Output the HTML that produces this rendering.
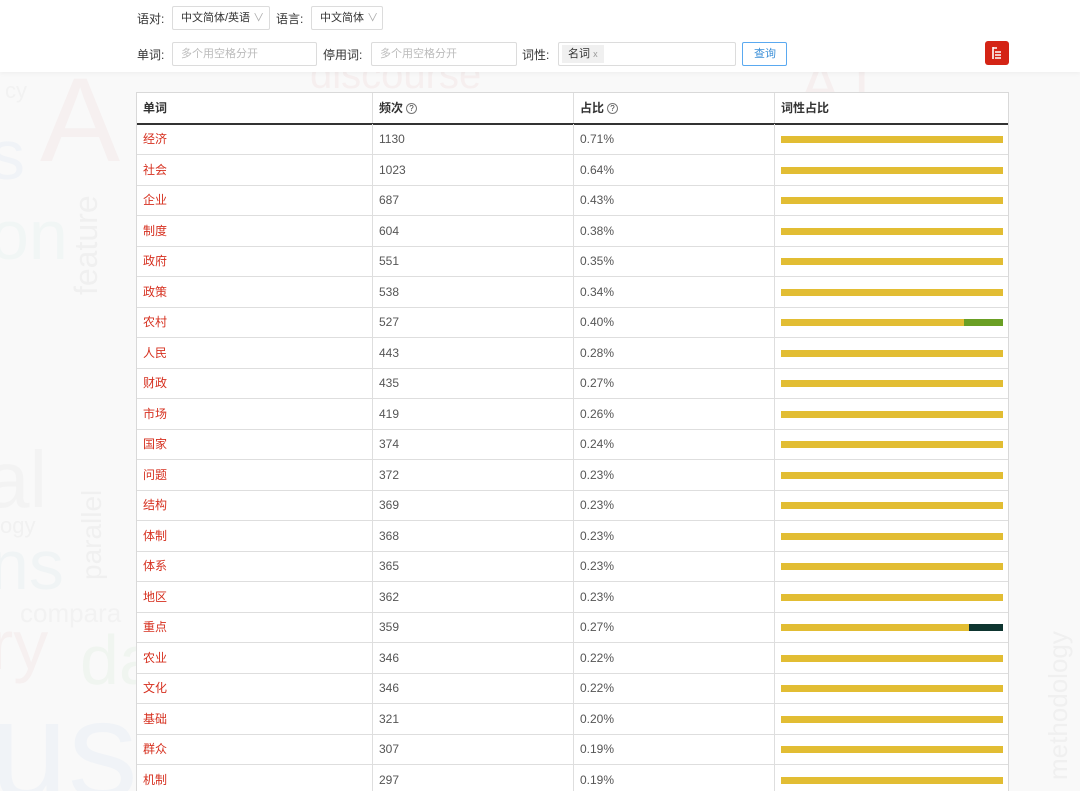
<!DOCTYPE html>
<html><head><meta charset="utf-8"><style>
*{margin:0;padding:0;box-sizing:border-box}
html,body{width:1080px;height:791px;overflow:hidden}
body{background:#f9f9f9;font-family:"Liberation Sans","Noto Sans CJK SC",sans-serif;font-size:12px;color:#333;position:relative}
.wm{position:absolute;font-family:"Liberation Sans",sans-serif;white-space:nowrap;line-height:1}
.top{position:absolute;left:0;top:0;width:1080px;height:72px;background:#fff;box-shadow:0 2px 4px rgba(0,0,0,.04)}
.lb{position:absolute;font-size:12px;color:#333}
.box{position:absolute;border:1px solid #dcdcdc;background:#fff;height:24px;font-size:11px;line-height:22px;padding-left:8px;color:#333;border-radius:2px}
.ph{color:#bbb}
.tbl{position:absolute;left:136px;top:92px;width:873px;height:699px;background:#fff;border:1px solid #d9d9d9;border-bottom:none;overflow:hidden}
.row{position:absolute;left:0;width:871px;height:31px;border-bottom:1px solid #dedede}
.c{position:absolute;top:0;height:100%;line-height:30px;padding-left:6px;font-size:12px;color:#555}
.c1{left:0;width:235px;color:#d6301f}
.c2{left:235px;width:201px;border-left:1px solid #dedede}
.c3{left:436px;width:201px;border-left:1px solid #dedede}
.c4{left:637px;width:234px;border-left:1px solid #dedede}
.bar{position:absolute;left:6px;top:12px;width:222px;height:7px;background:#e2bd33}
.hd .c{font-weight:bold;color:#333}
.q{display:inline-block;width:11px;height:11px;border:1px solid #777;border-radius:50%;font-size:8px;line-height:9px;text-align:center;font-weight:normal;margin-left:3px;vertical-align:1px}
</style></head><body>
<div class="wm" style="left:40px;top:60px;font-size:120px;color:#f6f0f0">A</div>
<div class="wm" style="left:-10px;top:200px;font-size:70px;color:#f1f6f5">on</div>
<div class="wm" style="left:5px;top:80px;font-size:22px;color:#f2f2f2">cy</div>
<div class="wm" style="left:-10px;top:120px;font-size:70px;color:#f0f3f7">s</div>
<div class="wm" style="left:70px;top:295px;font-size:32px;color:#f0f0f0;transform:rotate(-90deg);transform-origin:left top">feature</div>
<div class="wm" style="left:-15px;top:440px;font-size:80px;color:#f3f3f3">al</div>
<div class="wm" style="left:0px;top:515px;font-size:22px;color:#f1f1f1">ogy</div>
<div class="wm" style="left:-10px;top:530px;font-size:70px;color:#f0f4f5">ns</div>
<div class="wm" style="left:78px;top:580px;font-size:28px;color:#f0f0f0;transform:rotate(-90deg);transform-origin:left top">parallel</div>
<div class="wm" style="left:20px;top:600px;font-size:26px;color:#f2f2f2">compara</div>
<div class="wm" style="left:-10px;top:610px;font-size:70px;color:#f6f0f0">ry</div>
<div class="wm" style="left:80px;top:625px;font-size:70px;color:#f0f5f0">da</div>
<div class="wm" style="left:-10px;top:680px;font-size:140px;color:#f0f3f7">us</div>
<div class="wm" style="left:310px;top:55px;font-size:40px;color:#f6efef">discourse</div>
<div class="wm" style="left:800px;top:55px;font-size:60px;color:#f6efef">A I</div>
<div class="wm" style="left:1045px;top:780px;font-size:26px;color:#f0f0f0;transform:rotate(-90deg);transform-origin:left top">methodology</div>

<div class="top"></div>
<div class="lb" style="left:137px;top:10px">语对:</div>
<div class="box" style="left:172px;top:6px;width:98px">中文简体/英语 <span style="color:#aaa">∨</span></div>
<div class="lb" style="left:276px;top:10px">语言:</div>
<div class="box" style="left:311px;top:6px;width:72px">中文简体 <span style="color:#aaa">∨</span></div>
<div class="lb" style="left:137px;top:46px">单词:</div>
<div class="box ph" style="left:172px;top:42px;width:145px">多个用空格分开</div>
<div class="lb" style="left:323px;top:46px">停用词:</div>
<div class="box ph" style="left:371px;top:42px;width:146px">多个用空格分开</div>
<div class="lb" style="left:522px;top:46px">词性:</div>
<div class="box" style="left:558px;top:42px;width:178px;padding-left:3px"><span style="display:inline-block;background:#f0f0f0;height:18px;line-height:18px;padding:0 6px;margin-top:2px">名词 <span style="font-size:9px;color:#999">x</span></span></div>
<div class="box" style="left:742px;top:42px;width:45px;border-color:#5aa9f0;color:#3b8fd8;padding-left:11px">查询</div>
<div style="position:absolute;left:985px;top:41px;width:24px;height:24px;background:#d42415;border-radius:3px">
<svg width="24" height="24" viewBox="0 0 24 24"><path d="M8 6v12M8 7h4M10 11h6M10 14h6M10 17h6" stroke="#fff" stroke-width="1.6" fill="none"/></svg></div>

<div class="tbl">
<div class="row hd" style="top:0;height:32px;border-bottom:2px solid #333"><div class="c c1" style="color:#333">单词</div><div class="c c2">频次<span class="q">?</span></div><div class="c c3">占比<span class="q">?</span></div><div class="c c4">词性占比</div></div>
<div id="rows"></div>
</div>
<script>
var d=[["经济",1130,"0.71%"],["社会",1023,"0.64%"],["企业",687,"0.43%"],["制度",604,"0.38%"],["政府",551,"0.35%"],["政策",538,"0.34%"],["农村",527,"0.40%",183,"#6a9f24"],["人民",443,"0.28%"],["财政",435,"0.27%"],["市场",419,"0.26%"],["国家",374,"0.24%"],["问题",372,"0.23%"],["结构",369,"0.23%"],["体制",368,"0.23%"],["体系",365,"0.23%"],["地区",362,"0.23%"],["重点",359,"0.27%",188,"#0e3530"],["农业",346,"0.22%"],["文化",346,"0.22%"],["基础",321,"0.20%"],["群众",307,"0.19%"],["机制",297,"0.19%"]];
var h="";for(var i=0;i<d.length;i++){var r=d[i];var t=31+i*30.5;
var bar=r[3]?'<div class="bar" style="background:linear-gradient(90deg,#e2bd33 '+r[3]+'px,'+r[4]+' '+r[3]+'px)"></div>':'<div class="bar"></div>';
h+='<div class="row" style="top:'+t+'px"><div class="c c1">'+r[0]+'</div><div class="c c2">'+r[1]+'</div><div class="c c3">'+r[2]+'</div><div class="c c4">'+bar+'</div></div>';}
document.getElementById("rows").innerHTML=h;
</script>
</body></html>
